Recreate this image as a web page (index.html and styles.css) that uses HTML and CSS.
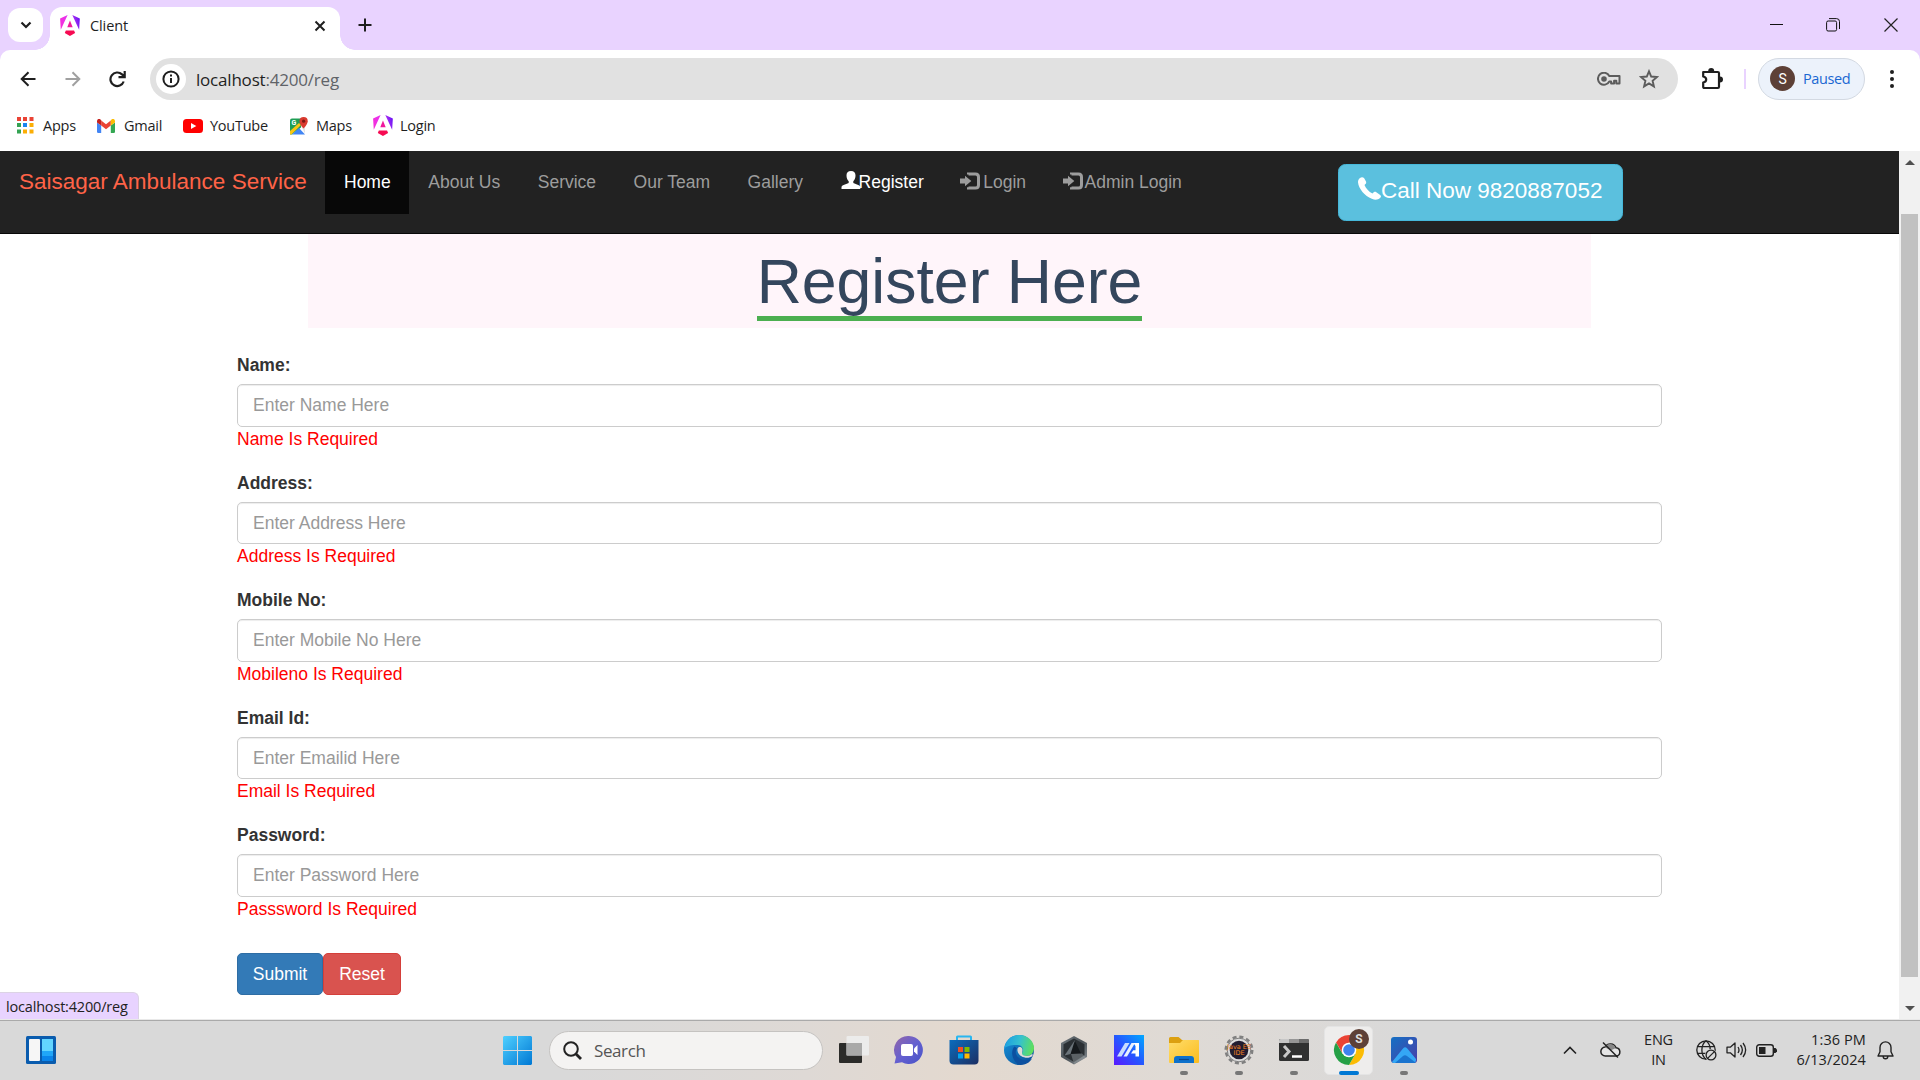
FILE: index.html
```html
<!DOCTYPE html>
<html lang="en">
<head>
<meta charset="utf-8">
<title>Client</title>
<link rel="stylesheet" href="styles.css">
</head>
<body>
<svg class="defs" aria-hidden="true">
  <defs>
    <linearGradient id="ang" gradientUnits="userSpaceOnUse" x1="0" x2="223" y1="120" y2="60"><stop offset="0" stop-color="#f52fd8"/><stop offset=".4" stop-color="#e832ee"/><stop offset=".75" stop-color="#a02cf2"/><stop offset="1" stop-color="#6a12f5"/></linearGradient>
    <linearGradient id="win" x1="0" y1="0" x2="1" y2="1"><stop offset="0" stop-color="#4fd0ff"/><stop offset="1" stop-color="#0078d4"/></linearGradient>
    <linearGradient id="chat" x1="0" y1="0" x2="1" y2="1"><stop offset="0" stop-color="#9366a8"/><stop offset=".5" stop-color="#6560d0"/><stop offset="1" stop-color="#4652c8"/></linearGradient>
    <linearGradient id="store" x1="0" y1="0" x2="1" y2="1"><stop offset="0" stop-color="#0b6cbd"/><stop offset="1" stop-color="#1c2f63"/></linearGradient>
    <linearGradient id="edgeTop" x1="0" y1="0.3" x2="1" y2="0.5"><stop offset="0" stop-color="#1b9de2"/><stop offset=".5" stop-color="#35c1cf"/><stop offset="1" stop-color="#5fe05a"/></linearGradient>
    <linearGradient id="edgeLow" x1="0" y1="0" x2="1" y2="1"><stop offset="0" stop-color="#1595dd"/><stop offset="1" stop-color="#0b4a94"/></linearGradient>
    <linearGradient id="asus" x1="0" y1="1" x2="1" y2="0"><stop offset="0" stop-color="#5a18ff"/><stop offset=".5" stop-color="#2558ff"/><stop offset="1" stop-color="#00a8ff"/></linearGradient>
    <linearGradient id="folder" x1="0" y1="0" x2="1" y2="1"><stop offset="0" stop-color="#ffdd6b"/><stop offset="1" stop-color="#fbbc1d"/></linearGradient>
    <linearGradient id="photo" x1="0" y1="0" x2="1" y2="1"><stop offset="0" stop-color="#1470c4"/><stop offset="1" stop-color="#4a3fa8"/></linearGradient>
    <linearGradient id="hex" x1="0" y1="0" x2="1" y2="1"><stop offset="0" stop-color="#727a80"/><stop offset=".5" stop-color="#4a5156"/><stop offset="1" stop-color="#8b9297"/></linearGradient>
    <symbol id="angular" viewBox="0 0 223 236"><path fill="url(#ang)" d="m222.077 39.192-8.019 125.923L137.387 0zM7.937 165.115 0 39.192 84.69 0z"/><path fill="#f0189c" d="m111.039 62.675 30.357 73.803H80.681z"/><path fill="#f60a52" d="m168.972 202.017-57.933 33.056-57.934-33.056 11.783-28.556h92.301z"/></symbol>
    <symbol id="signin" viewBox="0 0 20 18"><path fill="none" stroke="currentColor" stroke-width="3" d="M8.500 2.500V2h7q3 0 3 3v8q0 3-3 3h-7v-.8"/><path fill="currentColor" d="M0 6.500h5V3.800L11.300 9 5 14.200v-2.700H0z"/></symbol>
  </defs>
</svg>

<header class="tabstrip">
  <button class="tab-search" aria-label="Search tabs"><svg width="12" height="8" viewBox="0 0 12 8"><path d="M1.500 1.500 6 6l4.500-4.500" fill="none" stroke="#1f1f1f" stroke-width="2.200"/></svg></button>
  <div class="tab">
    <svg width="20" height="21"><use href="#angular"/></svg>
    <span class="tab-title">Client</span>
    <svg class="tab-close" width="12" height="12" viewBox="0 0 12 12"><path d="m1.500 1.500 9 9m0-9-9 9" stroke="#1f1f1f" stroke-width="2"/></svg>
  </div>
  <svg class="new-tab" width="14" height="14" viewBox="0 0 14 14"><path d="M7 .5v13M.5 7h13" stroke="#1f1f1f" stroke-width="2"/></svg>
  <div class="window-controls">
    <svg width="13" height="13" viewBox="0 0 13 13"><path d="M0 6.500h13" stroke="#111"/></svg>
    <svg width="14" height="14" viewBox="0 0 14 14" fill="none" stroke="#111"><rect x=".6" y="3" width="10" height="10" rx="1.500"/><path d="M3 .6h7.500q3 0 3 3V11"/></svg>
    <svg width="14" height="14" viewBox="0 0 14 14"><path d="m.5.5 13 13m0-13-13 13" stroke="#222" stroke-width="1.200"/></svg>
  </div>
</header>

<div class="toolbar">
  <div class="nav-buttons">
    <svg width="16" height="16" viewBox="0 0 16 16" fill="none" stroke="#1f1f1f" stroke-width="2"><path d="M15.500 8H2M8.500 1.200 1.700 8l6.800 6.800"/></svg>
    <svg width="16" height="16" viewBox="0 0 16 16" fill="none" stroke="#a0a0a0" stroke-width="2"><path d="M.5 8H14M7.500 1.200 14.300 8l-6.800 6.800"/></svg>
    <svg width="17" height="17" viewBox="0 0 17 17" fill="none" stroke="#1f1f1f" stroke-width="2.200"><path d="M14.700 10.500A6.800 6.800 0 1 1 13 3.400L15 5.300M15.700 0v6.200H9.500"/></svg>
  </div>
  <div class="omnibox">
    <span class="site-info"><svg width="18" height="18" viewBox="0 0 18 18"><circle cx="9" cy="9" r="7.600" fill="none" stroke="#1f1f1f" stroke-width="2"/><path d="M9 4.500v2M9 8v5" stroke="#1f1f1f" stroke-width="2"/></svg></span>
    <span class="url">localhost<span class="url-rest">:4200/reg</span></span>
    <svg class="key" width="24" height="14" viewBox="0 0 24 14" fill="none" stroke="#5c5c5c" stroke-width="2"><path d="M12.300 4H22.500v7.500h-3.200V8.800h-2.200v2.700h-3V9.500h-1.800A6 6 0 1 1 12.300 4z" stroke-linejoin="round"/><circle cx="7" cy="7" r="1.800" fill="#5c5c5c"/></svg>
    <svg class="star" width="20" height="20" viewBox="0 0 20 20"><path d="m10 2.300 2.200 5.200 5.800.5-4.400 3.800 1.300 5.600L10 14.400l-4.900 3 1.300-5.600L2 8l5.800-.5z" fill="none" stroke="#5c5c5c" stroke-width="1.900"/></svg>
  </div>
  <svg class="puzzle" width="22" height="22" viewBox="0 0 22 22"><path d="M2.200 4h14.600q1.200 0 1.200 1.200v13.600q0 1.200-1.200 1.200H3.400q-1.200 0-1.200-1.200v-4.300q3-.6 3-3t-3-3z" fill="none" stroke="#1f1f1f" stroke-width="2.200" stroke-linejoin="round"/><path d="M7.200 3a3 3 0 0 1 6 0M19 8.500a3 3 0 0 1 0 6" fill="#1f1f1f"/></svg>
  <span class="separator"></span>
  <div class="profile"><span class="avatar">S</span><span class="profile-state">Paused</span></div>
  <svg class="kebab" width="4" height="18" viewBox="0 0 4 18" fill="#1f1f1f"><circle cx="2" cy="2" r="2"/><circle cx="2" cy="9" r="2"/><circle cx="2" cy="16" r="2"/></svg>
</div>

<nav class="bookmarks">
  <a class="bm bm-apps"><svg width="17" height="17" viewBox="0 0 17 17"><path fill="#ea4335" d="M0 0h4v4H0zM6 0h4v4H6zM12.500 0h4v4h-4z"/><path fill="#34a353" d="M0 6h4v4H0zM0 12.500h4v4H0z"/><path fill="#1a84f0" d="M6 6h4v4H6z"/><path fill="#fbae05" d="M12.500 6h4v4h-4zM6 12.500h4v4H6zM12.500 12.500h4v4h-4z"/></svg><span>Apps</span></a>
  <a class="bm bm-gmail"><svg width="18" height="14" viewBox="0 0 18 14"><path fill="#4285f4" d="M0 3.500 4.200 6.500V14H1.200Q0 14 0 12.800z"/><path fill="#34a853" d="M18 3.500 13.800 6.500V14h3q1.200 0 1.200-1.200z"/><path fill="#ea4335" d="M4.200 1.500 9 5.200l4.800-3.700v5L9 10.300 4.200 6.500z"/><path fill="#c5221f" d="M0 3.500V2.100Q.3-.6 3-.1L4.200 1.500v5z"/><path fill="#fbbc04" d="M18 3.500V2.100Q17.700-.6 15-.1l-1.200 1.600v5z"/></svg><span>Gmail</span></a>
  <a class="bm bm-youtube"><svg width="20" height="14" viewBox="0 0 20 14"><rect width="20" height="14" rx="3.500" fill="#f00"/><path fill="#fff" d="m8 4 5.300 3L8 10z"/></svg><span>YouTube</span></a>
  <a class="bm bm-maps"><svg width="18" height="18" viewBox="0 0 18 18"><path fill="#1e9e55" d="M2 1.500h9v9L2 17.500H0v-14q0-2 2-2z"/><path fill="#f9c513" d="m0 14 9-8 2 2L1.500 17.500H0z"/><path fill="#4285f4" d="m2 17.500 7-6.500 6 6.500z"/><path fill="#e4e4e4" d="m11 9 4-1v8.500z"/><text x="1.500" y="8" class="map-g">G</text><path fill="#d93a2f" d="M13.500 11.500Q9.500 7 9.500 4.200a4.100 4.100 0 0 1 8.200 0Q17.700 7 13.500 11.500z"/><circle cx="13.600" cy="4.200" r="1.600" fill="#7b1712"/></svg><span>Maps</span></a>
  <a class="bm bm-login"><svg width="20" height="21"><use href="#angular"/></svg><span>Login</span></a>
</nav>

<div class="viewport">
  <div class="page">
    <nav class="navbar">
      <a class="brand">Saisagar Ambulance Service</a>
      <ul class="menu">
        <li class="active">Home</li><li>About Us</li><li>Service</li><li>Our Team</li><li>Gallery</li>
        <li class="current"><svg class="user-icon" width="20" height="18" viewBox="0 0 20 18"><path fill="currentColor" d="M10 0c3 0 4.700 1.800 4.500 4.800-.1 2.800-1 4.200-2.200 5.500v1.500c.5 1.400 7 1.500 7 4.500V18H.5v-1.700c0-3 6.800-3.100 7.200-4.500v-1.500C6.500 9 5.600 7.600 5.500 4.800 5.300 1.800 7 0 10 0z"/></svg>Register</li>
        <li><svg class="in-icon" width="20" height="18"><use href="#signin"/></svg>Login</li>
        <li><svg class="in-icon" width="20" height="18"><use href="#signin"/></svg>Admin Login</li>
      </ul>
      <a class="call"><svg width="23" height="23" viewBox="0 0 23 23"><path fill="#fff" d="M1.700 1.200C3.300-.2 5.100-.2 6.200 1.300L8 4.500c.5 1.500 0 2.600-1.500 3.400 1.300 3.500 4.300 6.600 8 8.600 1.300-1.700 2.600-2 3.800-1.300l3.900 2.700c1.100.9 1 2.100-.2 3.200-2 2-5 2.300-8.200.7C6.800 18.800.6 11.800 0 5.200 0 3.500.6 2.200 1.700 1.200z"/></svg><span>Call Now 9820887052</span></a>
    </nav>
    <main class="content">
      <div class="banner"><h1>Register Here</h1></div>
      <form class="form">
        <div class="group"><label for="name">Name:</label><input id="name" placeholder="Enter Name Here"><span class="error">Name Is Required</span></div>
        <div class="group"><label for="address">Address:</label><input id="address" placeholder="Enter Address Here"><span class="error">Address Is Required</span></div>
        <div class="group"><label for="mobile">Mobile No:</label><input id="mobile" placeholder="Enter Mobile No Here"><span class="error">Mobileno Is Required</span></div>
        <div class="group"><label for="email">Email Id:</label><input id="email" placeholder="Enter Emailid Here"><span class="error">Email Is Required</span></div>
        <div class="group"><label for="password">Password:</label><input id="password" type="password" placeholder="Enter Password Here"><span class="error">Passsword Is Required</span></div>
        <div class="actions"><button type="button" class="submit">Submit</button><button type="button" class="reset">Reset</button></div>
      </form>
    </main>
  </div>
  <div class="scrollbar"><span class="arrow up"></span><span class="thumb"></span><span class="arrow down"></span></div>
  <div class="status">localhost:4200/reg</div>
</div>

<footer class="taskbar">
  <svg class="widgets" width="30" height="28" viewBox="0 0 30 28"><rect width="30" height="28" rx="1.500" fill="#0a5cae"/><rect x="3" y="3" width="11" height="22" rx="1" fill="#f6f6f6"/><path fill="#62d5ff" d="M16 3h11v12H16z"/><path fill="#20a6f8" d="M16 15h11v5H16z"/><path fill="#0a84ea" d="M16 20h11v5H16z"/></svg>
  <svg class="start" width="29" height="29" viewBox="0 0 29 29"><path fill="url(#win)" d="M1 0h13v14H0V1zM15 0h13l1 1v13H15zM0 15h14v14H1l-1-1zM15 15h14v13l-1 1H15z"/></svg>
  <div class="search"><svg width="19" height="19" viewBox="0 0 19 19" fill="none" stroke="#222"><circle cx="8" cy="8" r="6.800" stroke-width="2"/><path d="m13 13 5 5" stroke-width="2.800"/></svg><span>Search</span></div>
  <div class="apps">
    <div class="app"><svg viewBox="0 0 32 32"><rect x="1" y="9" width="23" height="20" rx="1" fill="#2b2b29"/><rect x="8.500" y="2" width="22.500" height="19.500" rx="1" fill="#ededed" opacity=".9"/><path fill="#a9a9a8" d="M8.500 9H24v12.500H8.500z"/></svg></div>
    <div class="app"><svg viewBox="0 0 32 32"><path fill="url(#chat)" d="M16 2a14 14 0 1 1-7 26.200L1.500 29.500 3 23A14 14 0 0 1 16 2z"/><rect x="8" y="10" width="12" height="12" rx="2" fill="#fff"/><path fill="#fff" d="m21 14.500 3.500-3.500v10L21 17.500z"/></svg></div>
    <div class="app"><svg viewBox="0 0 32 32"><path d="M9 8V3q0-.5.500-.5h13q.5 0 .5.500v5" fill="none" stroke="#29b6f0" stroke-width="2"/><path fill="url(#store)" d="M1.500 6h29v20.500q0 4-4 4h-21q-4 0-4-4z"/><path fill="#f25022" d="M10 13h5v5h-5z"/><path fill="#7fba00" d="M16.500 13h5v5h-5z"/><path fill="#00a4ef" d="M10 19.500h5v5h-5z"/><path fill="#ffb900" d="M16.500 19.500h5v5h-5z"/></svg></div>
    <div class="app"><svg viewBox="0 0 32 32"><circle cx="16" cy="16" r="15" fill="url(#edgeLow)"/><path fill="url(#edgeTop)" d="M1.200 14.500C2.500 6.500 8.500 1 16 1c9 0 15 6.500 15 13 0 5-3.500 8-7.800 8-3.500 0-5.200-1.500-4.200-3 2-3 1-7.500-4-8C9 10.500 3.500 12 1.200 14.500z"/><path fill="#0c50a0" d="M11.500 12.500C7 17 9 28 17 30.900c5 .2 9.500-2 12-6.400-4 2.200-9 2.300-12.500-.2-4-2.800-4.800-7-2.500-10z"/><path fill="#dedad7" d="M29.500 22c-3 2.500-8 2.200-11 .3-2.500-1.500-4.500-4.500-4-7.300.8-3.500 6.500-2 4.700 3-.8 2.200.8 3.700 4 4q3.500.2 6.300-2.200z"/></svg></div>
    <div class="app"><svg viewBox="0 0 32 32"><path fill="url(#hex)" d="m16 2 13 7v14l-13 7.500L3 23V9z"/><path fill="#2b3034" d="m16 4.500 10.500 5.800v11L16 28 5.500 21.500V10.300z"/><path fill="#15191c" d="m17 7 6 12.500-10.500.5H8z"/><path fill="#6b747a" d="M17 6 6.500 21.500l6-1.500z"/><path fill="#a6acb0" d="m13 20 11-.5 4 4L16 30z" opacity=".4"/></svg></div>
    <div class="app"><svg viewBox="0 0 32 32"><path fill="url(#asus)" d="M1 1h30v30H1z"/><path fill="#c9dcff" d="m4 22.500 8-13.500h4.500l-8 13.500z"/><path fill="#e9f1ff" d="m10.500 22.500 8-13.500H22l-8 13.500z"/><path fill="#fff" d="M20.500 9H26v13.500h-3.500v-3H18l2.200-3.300h2.300V12z"/></svg></div>
    <div class="app running"><svg viewBox="0 0 32 32"><path fill="#dca010" d="M1 4.500Q1 3 2.500 3h8L14 6H29q2 0 2 2v5H1z"/><path fill="url(#folder)" d="M1 9h11l3-3h15q1 0 1 1v21q0 1-1 1H2q-1 0-1-1z"/><path fill="#0e71cb" d="M6 29v-4q0-3 3-3h14q3 0 3 3v4z"/><path stroke="#0a478b" stroke-width="1.200" d="M11 25.500h10"/></svg></div>
    <div class="app running"><svg viewBox="0 0 32 32"><circle cx="16" cy="16" r="13.200" fill="none" stroke="#808080" stroke-width="2.600" stroke-dasharray="4 2.910"/><circle cx="16" cy="16" r="11.800" fill="#dcdcdc" stroke="#808080"/><circle cx="16" cy="16" r="9.300" fill="#211d30"/><text x="16" y="15" class="ide-text" textLength="24" lengthAdjust="spacingAndGlyphs">Java EE</text><text x="16" y="21" class="ide-text" textLength="11" lengthAdjust="spacingAndGlyphs">IDE</text></svg></div>
    <div class="app running"><svg viewBox="0 0 32 32"><rect x="1" y="5" width="30" height="22" rx="1.500" fill="#303131"/><path fill="#c7c7c7" d="M1 6.500Q1 5 2.500 5H11v4H1z"/><path fill="#969696" d="M11 5h10v4H11z"/><path fill="#6c6c6c" d="M21 5h8.500Q31 5 31 6.500V9H21z"/><path d="m6 12 5 5.500L6 23" fill="none" stroke="#c8c8c8" stroke-width="3"/><path d="M14 22.500h10" stroke="#fff" stroke-width="2.500"/></svg></div>
    <div class="app running focused"><svg viewBox="0 0 32 32"><circle cx="16" cy="16" r="15" fill="#fff"/><path fill="#ea4335" d="M3 8.500A15 15 0 0 1 29 8.500H16L9.500 19.500z"/><path fill="#fbbc05" d="M29 8.500A15 15 0 0 1 16 31l6.500-11.250L16 8.500z"/><path fill="#25a046" d="M3 8.500A15 15 0 0 0 16 31l6.500-11.250-13 0z"/><circle cx="16" cy="16" r="7.300" fill="#fff"/><circle cx="16" cy="16" r="5.800" fill="#3f82ee"/></svg><span class="app-badge">S</span></div>
    <div class="app running"><svg viewBox="0 0 32 32"><rect x="3" y="3" width="26" height="26" rx="3" fill="url(#photo)"/><path fill="#34a7f5" d="M4 28 15 14.500q2-2.500 4.300 0L28 25v1q0 3-3 3H6q-1.500 0-2-1z"/><path fill="#1a74cf" d="m7 29 8-7q2-1.500 4 0l8.500 6.500q-1 .5-2.500.5z"/><circle cx="22.500" cy="8" r="2.500" fill="#fff"/></svg></div>
  </div>
  <div class="tray">
    <svg class="chevron" width="14" height="9" viewBox="0 0 14 9"><path d="m1 7.500 6-6 6 6" fill="none" stroke="#222" stroke-width="1.600"/></svg>
    <svg class="cloud" width="21" height="18" viewBox="0 0 21 18"><path d="M5.500 15a4.500 4.500 0 0 1-.3-9A6 6 0 0 1 16 6.700a4.200 4.200 0 0 1 .5 8.300z" fill="#e5e5e5" stroke="#222" stroke-width="1.500"/><path fill="#888" d="M5 6.500a5.500 5.500 0 0 1 10.500.8l-4.500 2z"/><path d="m3 1.500 15 15" stroke="#222" stroke-width="1.500"/></svg>
    <div class="lang"><span>ENG</span><span>IN</span></div>
    <svg class="globe" width="21" height="21" viewBox="0 0 21 21" fill="none" stroke="#222" stroke-width="1.300"><circle cx="10" cy="10" r="9.200"/><path d="M10 .8C4.500 5 4.500 15 10 19.200M10 .8q4.500 3.500 4.200 9M1.800 6.700h16.400M1.800 13.300H10"/><circle cx="15" cy="15" r="6" fill="#d9d9d9" stroke="none"/><circle cx="15" cy="15" r="4.900"/><path d="m11.600 18.400 6.800-6.800"/></svg>
    <svg class="volume" width="21" height="18" viewBox="0 0 21 18" fill="none" stroke="#222" stroke-width="1.300"><path d="M1 6.200h3.300L9 2v14l-4.700-4.200H1z" stroke-linejoin="round"/><path d="M12 6q2 3 0 6M14.500 4q3.700 5 0 10M17 2q5.300 7 0 14"/></svg>
    <svg class="battery" width="21" height="13" viewBox="0 0 21 13"><rect x=".7" y=".7" width="16.600" height="11.600" rx="2.500" fill="none" stroke="#222" stroke-width="1.400"/><rect x="3" y="3" width="6.500" height="7" fill="#222"/><path fill="#222" d="M18 4h1.500l1.500 1.500v2L19.500 9H18z"/></svg>
    <div class="clock"><span>1:36 PM</span><span>6/13/2024</span></div>
    <svg class="bell" width="17" height="19" viewBox="0 0 17 19" fill="none" stroke="#222" stroke-width="1.400"><path d="M8.500.9a5.500 5.500 0 0 1 5.500 5.600v4.300l2 4.200H1l2-4.200V6.500A5.500 5.500 0 0 1 8.500.9zM6.200 15.500a2.300 2.300 0 0 0 4.600 0" stroke-linejoin="round"/></svg>
  </div>
</footer>
</body>
</html>
```
FILE: styles.css
```css
*{box-sizing:border-box}
body{margin:0;width:1920px;height:1080px;overflow:hidden;display:flex;flex-direction:column;background:#fff;font-family:"Open Sans",sans-serif;color:#1f1f1f}
svg{display:block;flex:none}
.defs{position:absolute;width:0;height:0}
button{font:inherit;border:0;padding:0}

/* browser chrome; the strip runs on under the toolbar's rounded corners */
.tabstrip{height:60px;margin-bottom:-10px;flex:none;display:flex;background:#e9d3ff;padding:0 0 10px 8px}
.tab-search{width:35px;height:34px;margin-top:8px;border-radius:12px;background:#fff;display:grid;place-items:center}
.tab{position:relative;width:290px;height:43px;margin:7px 0 0 7px;padding:0 14px 6px 10px;background:#fff;border-radius:12px 12px 0 0;display:flex;align-items:center}
.tab::before,.tab::after{content:"";position:absolute;bottom:0;width:15px;height:15px}
.tab::before{left:-15px;background:radial-gradient(circle at 0 0,transparent 14.500px,#fff 15px)}
.tab::after{right:-15px;background:radial-gradient(circle at 100% 0,transparent 14.500px,#fff 15px)}
.tab-title{margin-left:10px;font-size:14.500px;letter-spacing:-.1px}
.tab-close{margin-left:auto}
.new-tab{margin:18px 0 0 18px}
.window-controls{margin:18px 22px 0 auto;display:flex;gap:43px}
.window-controls svg:nth-child(2){margin-right:1px}
.toolbar{position:relative;height:58px;flex:none;display:flex;align-items:center;padding-right:26px;border-radius:10px 10px 0 0;background:#fff}
.nav-buttons{display:flex;gap:28.500px;padding-left:20px;width:150px;align-items:center}
.omnibox{width:1528px;height:42px;border-radius:21px;background:#e1e1e1;display:flex;align-items:center;padding:0 19px 0 6px}
.site-info{width:30px;height:30px;border-radius:50%;background:#fff;display:grid;place-items:center}
.url{margin-left:10px;font-size:17px;letter-spacing:-.2px}
.url-rest{color:#5f6368}
.key{margin-left:auto}
.star{margin-left:18px}
.puzzle{margin-left:23px}
.separator{width:2px;height:20px;margin-left:21px;background:#e9d3ff}
.profile{width:107px;height:42px;margin-left:12px;border:1px solid #d3d9e2;border-radius:21px;background:#ecf2fb;display:flex;align-items:center;padding:0 0 1px 11px;color:#1967d2;font-size:14.500px;letter-spacing:-.4px}
.avatar{width:25px;height:25px;margin-right:8px;border-radius:50%;background:#5d4037;color:#fff;display:grid;place-items:center;font:14px Roboto,sans-serif}
.kebab{margin-left:auto}
.bookmarks{height:43px;flex:none;display:flex;padding:0 0 8px 17px;font-size:14.500px;letter-spacing:-.25px}
.bm{display:flex;align-items:center}
.bm span{margin-top:-1px}
.bm-apps{width:80px;gap:9px}
.bm-gmail{width:86px;gap:9px}
.bm-youtube{width:107px;gap:7px}
.bm-maps{width:83px;gap:8px}
.bm-login{gap:7px}
.map-g{font:bold 7px Roboto,sans-serif;fill:#fff}

/* web page */
.viewport{height:868px;flex:none;position:relative;display:flex;font-family:"Liberation Sans",Arial,sans-serif;font-size:17.500px;line-height:25px;color:#333}
.page{width:1899px}
.navbar{height:83px;background:#222;border-bottom:1px solid #080808;display:flex;align-items:flex-start;color:#9d9d9d}
.brand{width:325px;padding:18px 0 0 19px;font-size:22.500px;color:#ff6347;white-space:nowrap}
.menu{list-style:none;margin:0;padding:0;display:flex}
.menu li{height:63px;padding:18.750px;display:flex;white-space:nowrap}
.menu .active{width:84px;margin-right:.5px;padding-left:19px;background:#080808;color:#fff}
.menu .current{color:#fff}
.user-icon{margin:1px -2px 0 0}
.in-icon{margin:2px 3px 0 -1px}
.menu li:last-child .in-icon{margin-right:2px}
.call{width:285px;height:57px;margin:13px 276px 0 auto;padding:12px 0 0 19px;border:1px solid #46b8da;border-radius:7.500px;background:#5bc0de;color:#fff;font-size:22.500px;line-height:28px;display:flex}
.content{padding:0 237px}
.banner{width:1283px;height:94px;margin:0 auto;background:#fff5fa;text-align:center}
.banner h1{display:inline-block;height:87px;margin:0;padding-top:13px;border-bottom:5px solid #4caf50;font-size:62.500px;line-height:69px;font-weight:400;color:#34465d}
.form{padding-top:25px}
.group{height:117.500px;display:flex;flex-direction:column}
.group label{font-weight:700;margin-bottom:6.250px}
.group input{height:42.500px;border:1px solid #ccc;border-radius:5px;padding:7.500px 15px;font:inherit;box-shadow:inset 0 1px 1px rgba(0,0,0,.075)}
.group input::placeholder{color:#999;opacity:1}
.error{color:#f00}
.actions{display:flex;padding-top:12.500px}
.actions button{height:42px;border-radius:5px;color:#fff}
.submit{width:86px;background:#337ab7;border:1px solid #2e6da4}
.reset{width:78px;background:#d9534f;border:1px solid #d43f3a}
.scrollbar{width:21px;background:#f1f1f1;display:flex;flex-direction:column;align-items:center}
.arrow{width:0;height:0;border:5px solid transparent}
.up{margin-top:4px;border-bottom-color:#505050}
.thumb{width:17px;height:763px;margin-top:49px;background:#c1c1c1}
.down{margin-top:29px;border-top-color:#505050}
.status{position:absolute;left:0;bottom:0;width:139px;height:27px;padding-left:6px;border:1px solid #dcd3e5;border-width:1px 1px 0 0;border-radius:0 6px 0 0;background:#e8d3ff;font:14.500px/28px "Open Sans",sans-serif;letter-spacing:-.18px;color:#222}

/* desktop taskbar */
.taskbar{height:61px;flex:none;display:flex;align-items:center;padding:0 26px;border-top:1px solid #e9e9e9;background:linear-gradient(90deg,#d9d9d9 0 30%,#ded9d5 42%,#e3d9cf 50%,#dfdad5 61%,#d9d9d9 74%);box-shadow:inset 0 1px #aaa}
.start{margin-left:447px}
.search{width:274px;height:39px;margin-left:17px;border:1px solid #c5c3c1;border-radius:20px;background:#f4f3f2;display:flex;align-items:center;padding-left:13px;font-size:17px;color:#555;letter-spacing:-.4px}
.search span{margin-left:12px}
.apps{display:flex;margin-left:3px}
.app{position:relative;width:55px;height:49px;display:grid;place-items:center}
.app>svg{position:relative;width:32px;height:32px}
.running::after{content:"";position:absolute;bottom:0;width:8px;height:4px;border-radius:2px;background:#777}
.focused::before{content:"";position:absolute;inset:0 3px;border:1px solid #e4e4e4;border-radius:5px;background:#eeedec}
.focused::after{width:20px;background:#0078d4}
.app-badge{position:absolute;left:28px;top:3px;width:20px;height:20px;border-radius:50%;background:#5d4037;color:#ddd;display:grid;place-items:center;font:bold 12px Roboto,sans-serif}
.ide-text{font:6.500px "DejaVu Sans",sans-serif;fill:#f58220;text-anchor:middle}
.tray{margin-left:auto;display:flex;align-items:center;font-size:14.500px;line-height:20px;color:#222;letter-spacing:-.2px}
.cloud{margin-left:23px}
.lang{width:29px;margin-left:23px;display:flex;flex-direction:column;align-items:center}
.globe{margin-left:23px}
.volume{margin-left:9px}
.battery{margin-left:9px}
.clock{width:80px;margin-left:9px;display:flex;flex-direction:column;align-items:flex-end;letter-spacing:.1px}
.bell{margin-left:11px}
```
